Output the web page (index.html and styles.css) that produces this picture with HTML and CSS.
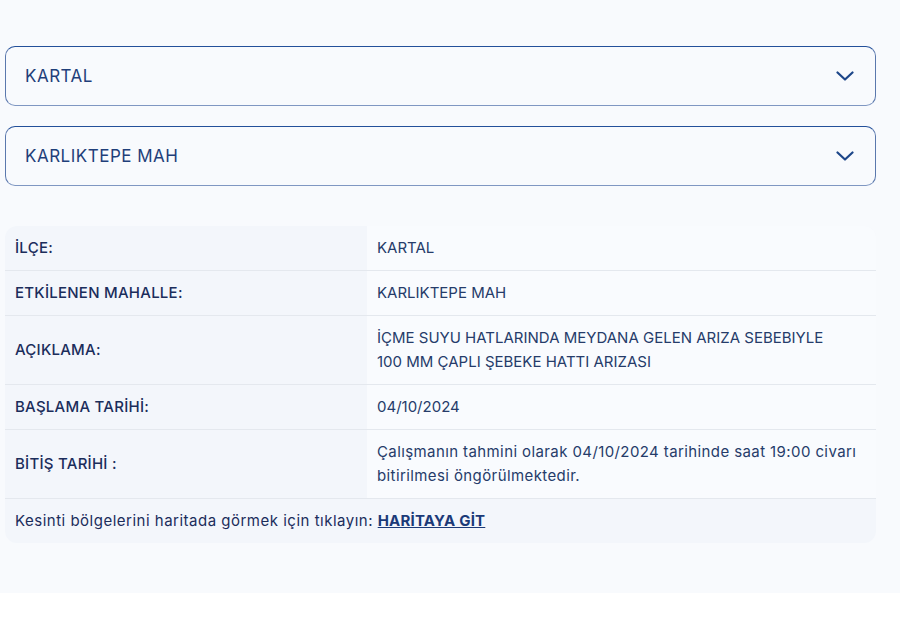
FILE: index.html
```html
<!DOCTYPE html>
<html lang="tr">
<head>
    <meta charset="UTF-8">
    <meta name="viewport" content="width=device-width, initial-scale=1.0">
    <title>Arıza Kesinti Bilgisi</title>
    <link rel="stylesheet" href="styles.css">
</head>
<body>
    <div class="page">
        <div class="select-box">
            <span>KARTAL</span>
            <svg class="chevron" width="18" height="10" viewBox="0 0 18 10"><path d="M1.5 1.5 L9 8.5 L16.5 1.5" fill="none" stroke="#1d4689" stroke-width="2.2" stroke-linecap="round" stroke-linejoin="round"/></svg>
        </div>
        <div class="select-box">
            <span>KARLIKTEPE MAH</span>
            <svg class="chevron" width="18" height="10" viewBox="0 0 18 10"><path d="M1.5 1.5 L9 8.5 L16.5 1.5" fill="none" stroke="#1d4689" stroke-width="2.2" stroke-linecap="round" stroke-linejoin="round"/></svg>
        </div>

        <div class="info">
            <div class="row">
                <div class="label">İLÇE:</div>
                <div class="value">KARTAL</div>
            </div>
            <div class="row">
                <div class="label">ETKİLENEN MAHALLE:</div>
                <div class="value">KARLIKTEPE MAH</div>
            </div>
            <div class="row">
                <div class="label">AÇIKLAMA:</div>
                <div class="value">İÇME SUYU HATLARINDA MEYDANA GELEN ARIZA SEBEBIYLE<br>100 MM ÇAPLI ŞEBEKE HATTI ARIZASI</div>
            </div>
            <div class="row">
                <div class="label">BAŞLAMA TARİHİ:</div>
                <div class="value">04/10/2024</div>
            </div>
            <div class="row">
                <div class="label">BİTİŞ TARİHİ :</div>
                <div class="value sentence">Çalışmanın tahmini olarak 04/10/2024 tarihinde saat 19:00 civarı bitirilmesi öngörülmektedir.</div>
            </div>
            <div class="footer">
                Kesinti bölgelerini haritada görmek için tıklayın: <a href="#">HARİTAYA GİT</a>
            </div>
        </div>
    </div>
</body>
</html>
```

FILE: styles.css
```css
body {
    margin: 0;
    background: #ffffff;
    font-family: Inter, "Noto Sans", sans-serif;
    color: #1b2d5b;
}
.page {
    background: #f8fafd;
    padding: 46px 24px 50px 5px;
}
.select-box {
    display: flex;
    align-items: center;
    justify-content: space-between;
    height: 58px;
    padding: 0 20px 0 19px;
    border: 1px solid #23509a;
    border-bottom-color: #7f97c2;
    border-left-color: #5a78ad;
    border-right-color: #5a78ad;
    border-radius: 10px;
    margin-bottom: 20px;
    font-size: 17px;
    letter-spacing: 0.5px;
    color: #1f3f7a;
}
.chevron {
    margin-right: 1px;
}
.info {
    margin-top: 40px;
    border-radius: 12px;
    overflow: hidden;
    background: #f3f6fb;
    font-size: 15px;
    line-height: 24px;
}
.row {
    display: grid;
    grid-template-columns: 362px 1fr;
    border-bottom: 1px solid #e4e8ee;
}
.label {
    display: flex;
    align-items: center;
    padding: 10px 10px;
    font-weight: 500;
    letter-spacing: 0.25px;
    color: #1b2d5b;
}
.value {
    padding: 10px 10px;
    background: #f9fbfe;
    color: #263c6a;
}
.sentence {
    letter-spacing: 0.4px;
}
.footer {
    padding: 10px 10px;
    letter-spacing: 0.5px;
    color: #1b2d5b;
}
.footer a {
    color: #1b3a78;
    font-weight: 700;
    letter-spacing: 0.2px;
    text-decoration: underline;
}
```
